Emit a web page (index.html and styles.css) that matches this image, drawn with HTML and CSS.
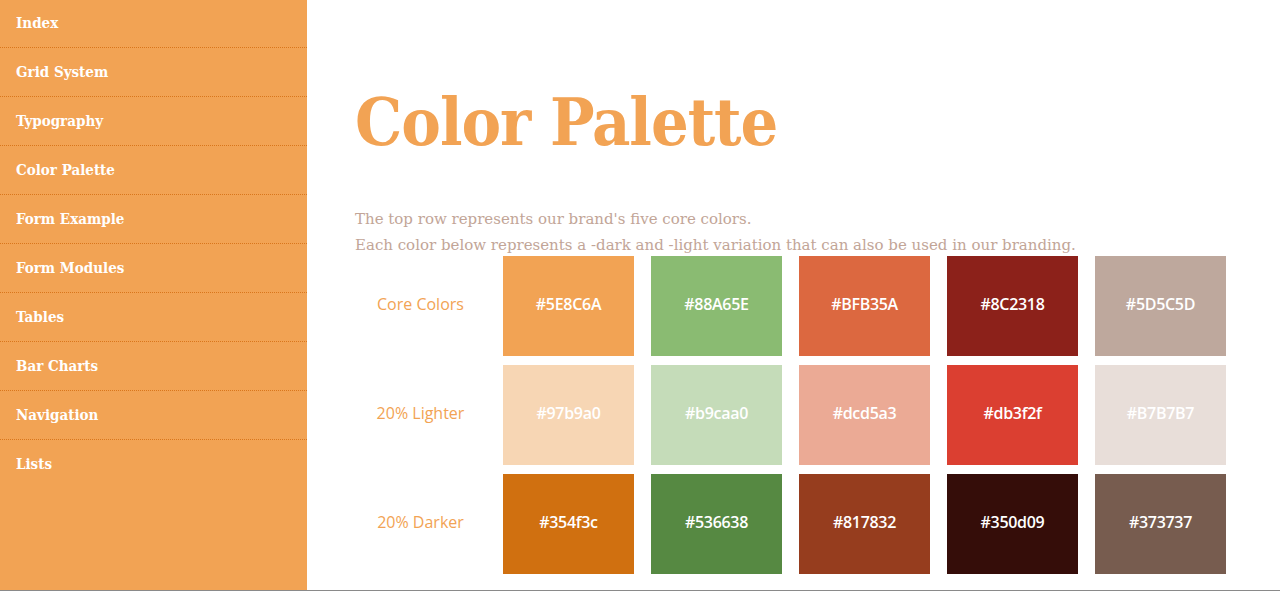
FILE: index.html
```html
<!DOCTYPE html>
<html>
<head>
<meta charset="utf-8">
<link rel="stylesheet" href="styles.css">
</head>
<body>
<div class="page">
  <nav class="sidebar">
    <a class="nav-item" href="#">Index</a>
    <a class="nav-item" href="#">Grid System</a>
    <a class="nav-item" href="#">Typography</a>
    <a class="nav-item" href="#">Color Palette</a>
    <a class="nav-item" href="#">Form Example</a>
    <a class="nav-item" href="#">Form Modules</a>
    <a class="nav-item" href="#">Tables</a>
    <a class="nav-item" href="#">Bar Charts</a>
    <a class="nav-item" href="#">Navigation</a>
    <a class="nav-item" href="#">Lists</a>
  </nav>
  <main class="content">
    <h1 class="title">Color Palette</h1>
    <p class="intro">The top row represents our brand's five core colors.<br>Each color below represents a -dark and -light variation that can also be used in our branding.</p>
    <div class="palette">
      <div class="label">Core Colors</div>
      <div class="swatch c1">#5E8C6A</div>
      <div class="swatch c2">#88A65E</div>
      <div class="swatch c3">#BFB35A</div>
      <div class="swatch c4">#8C2318</div>
      <div class="swatch c5">#5D5C5D</div>

      <div class="label">20% Lighter</div>
      <div class="swatch l1">#97b9a0</div>
      <div class="swatch l2">#b9caa0</div>
      <div class="swatch l3">#dcd5a3</div>
      <div class="swatch l4">#db3f2f</div>
      <div class="swatch l5">#B7B7B7</div>

      <div class="label">20% Darker</div>
      <div class="swatch d1">#354f3c</div>
      <div class="swatch d2">#536638</div>
      <div class="swatch d3">#817832</div>
      <div class="swatch d4">#350d09</div>
      <div class="swatch d5">#373737</div>
    </div>
  </main>
</div>
</body>
</html>
```

FILE: styles.css
```css
html, body {
  margin: 0;
  padding: 0;
  height: 100%;
  background: #fff;
}

body {
  font-family: "DejaVu Serif", "Liberation Serif", serif;
  font-stretch: condensed;
  overflow: hidden;
}

.page {
  display: flex;
  height: 590px;
  border-bottom: 1px solid #8a8a8a;
}

.sidebar {
  width: 307px;
  flex: none;
  background: #f2a354;
  display: flex;
  flex-direction: column;
  margin-top: -1px;
}

.nav-item {
  display: block;
  height: 48px;
  line-height: 49px;
  padding-left: 16px;
  color: #fff;
  font-weight: bold;
  font-size: 15px;
  text-decoration: none;
  border-bottom: 1px dotted #d9761c;
}

.nav-item:last-child {
  border-bottom: none;
}

.content {
  flex: 1;
  padding: 74px 0 0 48px;
}

.title {
  margin: 0;
  font-size: 66px;
  line-height: 96px;
  font-weight: bold;
  color: #f2a354;
  letter-spacing: -1px;
}

.intro {
  margin: 36px 0 0;
  font-size: 15px;
  line-height: 26px;
  font-stretch: normal;
  color: #c2a597;
}

.palette {
  display: grid;
  grid-template-columns: repeat(6, 131px);
  grid-auto-rows: 100px;
  column-gap: 17px;
  row-gap: 9px;
  margin-top: -2px;
}

.label,
.swatch {
  display: flex;
  align-items: center;
  justify-content: center;
  padding-bottom: 4px;
  font-family: "Open Sans", "Liberation Sans", sans-serif;
  font-stretch: normal;
  font-size: 16px;
}

.label {
  color: #f2a354;
}

.swatch {
  color: #fff;
  font-weight: 600;
  letter-spacing: -0.3px;
}

.c1 { background: #f2a354; }
.c2 { background: #8abb72; }
.c3 { background: #dc6840; }
.c4 { background: #8c211a; }
.c5 { background: #bea89d; }

.l1 { background: #f7d6b4; }
.l2 { background: #c5dcb9; }
.l3 { background: #ebaa95; }
.l4 { background: #db3f31; }
.l5 { background: #e8ded9; }

.d1 { background: #d07010; }
.d2 { background: #568942; }
.d3 { background: #963d1e; }
.d4 { background: #350d09; }
.d5 { background: #775c4f; }
```
